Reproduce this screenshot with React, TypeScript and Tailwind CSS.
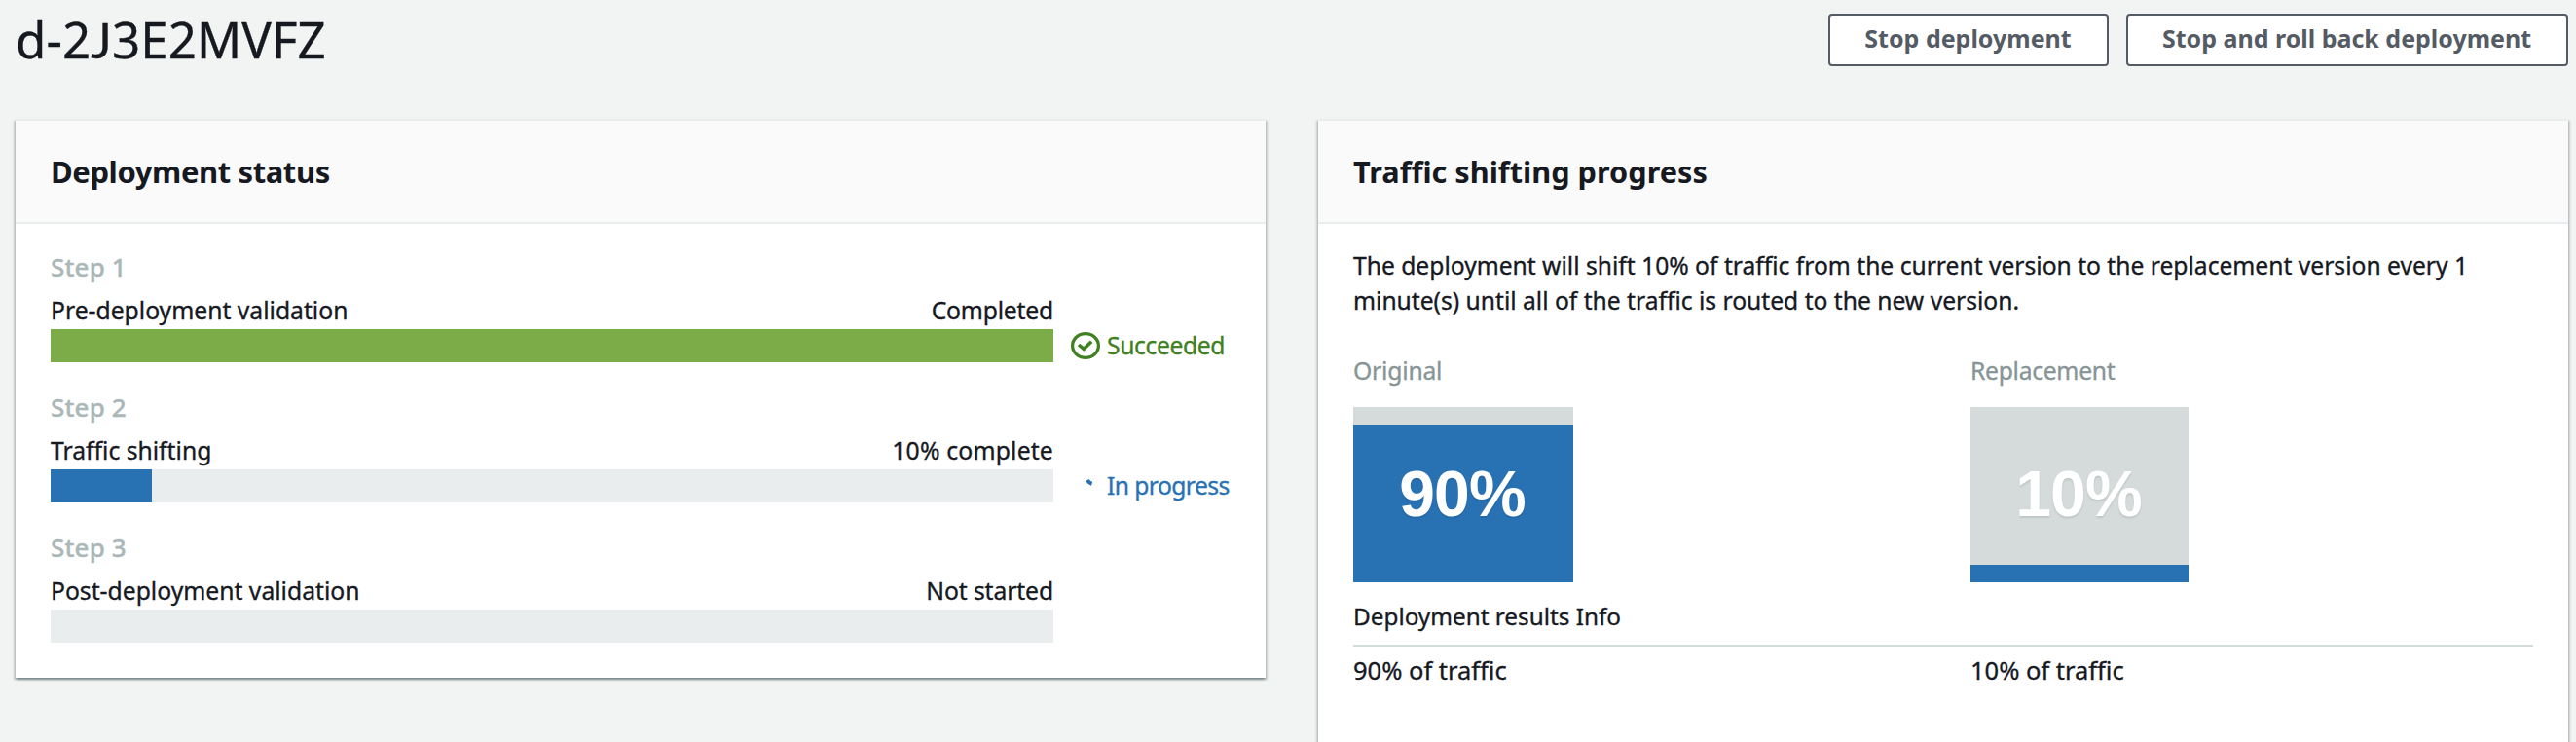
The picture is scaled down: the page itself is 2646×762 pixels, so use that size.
import type { ReactNode } from "react";

const cardShadow =
  "shadow-[0_2px_2px_0_rgba(0,28,36,0.3),2px_2px_2px_0_rgba(0,28,36,0.15),-2px_2px_2px_0_rgba(0,28,36,0.15)]";

function Card({ title, titleClass, className, children }: { title: string; titleClass: string; className: string; children: ReactNode }) {
  return (
    <section className={`border-t-2 border-[#eaeded] bg-white ${cardShadow} ${className}`}>
      <header className="flex h-[106px] items-center border-b-2 border-[#eaeded] bg-[#fafafa] px-9">
        <h2 className={`font-bold leading-10 [-webkit-text-stroke:0px] ${titleClass}`}>{title}</h2>
      </header>
      {children}
    </section>
  );
}

function CheckIcon() {
  return (
    <svg width="30" height="28" viewBox="0 0 30 28" fill="none" stroke="currentColor" className="shrink-0">
      <ellipse cx="15" cy="14" rx="13.4" ry="12.4" strokeWidth="3.2" />
      <path d="M8 13 L13.2 17.4 L21.2 9.8" strokeWidth="3.6" />
    </svg>
  );
}

function SpinnerIcon() {
  return (
    <svg width="30" height="28" viewBox="0 0 30 28" fill="none" stroke="currentColor" className="shrink-0">
      <path d="M16.8 8 Q18.4 10.6 21.6 11.8" strokeWidth="4" />
    </svg>
  );
}

interface StepProps {
  name: string;
  label: string;
  state: string;
  stateClass?: string;
  percent: number;
  barClass: string;
  status?: ReactNode;
}

function Step({ name, label, state, stateClass = "", percent, barClass, status }: StepProps) {
  return (
    <div>
      <h3 className="text-[26px] font-medium leading-9 tracking-[0.15px] text-[#aab7b8]">{name}</h3>
      <div className="mt-[9px] flex w-[1030px] justify-between">
        <span>{label}</span>
        <span className={stateClass}>{state}</span>
      </div>
      <div className="mt-px flex h-[34px] items-center gap-[18px]">
        <div className="h-full w-[1030px] shrink-0 bg-[#eaeded]">
          <div className={`h-full ${barClass}`} style={{ width: `${percent}%` }} />
        </div>
        {status}
      </div>
    </div>
  );
}

function TrafficBox({ percent, className }: { percent: number; className: string }) {
  return (
    <div className={`relative flex h-[180px] flex-col justify-end bg-[#d5dbdb] ${className}`}>
      <div className="bg-[#2872b4]" style={{ height: `${percent}%` }} />
      <span className="absolute inset-0 flex items-center justify-center pb-0.5 pr-0.5 font-['Liberation_Sans',sans-serif] text-[66px] font-bold leading-none tracking-[-0.8px] text-white [-webkit-text-stroke:0px] [text-shadow:0_2px_2px_rgba(0,0,0,0.1)]">
        {percent}%
      </span>
    </div>
  );
}

const buttonClass =
  "flex h-[54px] items-center justify-center whitespace-nowrap rounded-[4px] border-2 border-[#545b64] bg-white pb-[5px] pr-px text-[25px] font-bold text-[#545b64] [-webkit-text-stroke:0px]";

export default function App() {
  return (
    <div className="h-[762px] w-[2646px] overflow-hidden bg-[#f2f3f3] pl-4 pr-2 pt-3.5 font-['Noto_Sans',sans-serif] text-[24.7px] leading-9 text-[#16191f] [-webkit-text-stroke:0.35px_currentColor]">
      <header className="flex h-[54px] items-center justify-between">
        <h1 className="pb-px text-[51px] leading-[54px] tracking-[0.1px]">
          d-2<span className="font-['Lato',sans-serif]">J</span>3E2MVFZ
        </h1>
        <div className="flex gap-[18px]">
          <button className={`w-[288px] ${buttonClass}`}>Stop deployment</button>
          <button className={`w-[454px] ${buttonClass}`}>Stop and roll back deployment</button>
        </div>
      </header>

      <main className="mt-[54px] flex items-start justify-between">
        <Card title="Deployment status" titleClass="text-[31px] tracking-[-0.4px]" className="w-[1284px]">
          <div className="flex flex-col gap-7 px-9 pb-9 pt-[26px]">
            <Step
              name="Step 1"
              label="Pre-deployment validation"
              state="Completed"
              stateClass="tracking-[-0.2px]"
              percent={100}
              barClass="bg-[#7bac47]"
              status={
                <span className="flex items-center gap-[7px] tracking-[-0.4px] text-[#3f8021]">
                  <CheckIcon />
                  Succeeded
                </span>
              }
            />
            <Step
              name="Step 2"
              label="Traffic shifting"
              state="10% complete"
              stateClass="tracking-[0.2px]"
              percent={10.1}
              barClass="bg-[#2872b4]"
              status={
                <span className="flex items-center gap-[7px] tracking-[-0.6px] text-[#2872b4]">
                  <SpinnerIcon />
                  In progress
                </span>
              }
            />
            <Step name="Step 3" label="Post-deployment validation" state="Not started" stateClass="tracking-[-0.1px]" percent={0} barClass="" />
          </div>
        </Card>

        <Card title="Traffic shifting progress" titleClass="text-[30.7px]" className="h-[680px] w-[1284px]">
          <div className="px-9 pt-[25px]">
            <p className="whitespace-nowrap text-[24.64px]">
              The deployment will shift 10% of traffic from the current version to the replacement version every 1
              <br />
              minute(s) until all of the traffic is routed to the new version.
            </p>
            <div className="mt-9 grid grid-cols-[634px_1fr]">
              <div>
                <div className="tracking-[-0.2px] text-[#879596]">Original</div>
                <TrafficBox percent={90} className="mt-[19px] w-[226px]" />
              </div>
              <div>
                <div className="tracking-[-0.3px] text-[#879596]">Replacement</div>
                <TrafficBox percent={10} className="mt-[19px] w-[224px]" />
              </div>
            </div>
            <div className="mt-[17px] border-b-2 border-[#d5dbdb] pb-[11px] text-[24.3px]">Deployment results Info</div>
            <div className="mt-1.5 grid grid-cols-[634px_1fr] text-[25.5px]">
              <span>90% of traffic</span>
              <span>10% of traffic</span>
            </div>
          </div>
        </Card>
      </main>
    </div>
  );
}
